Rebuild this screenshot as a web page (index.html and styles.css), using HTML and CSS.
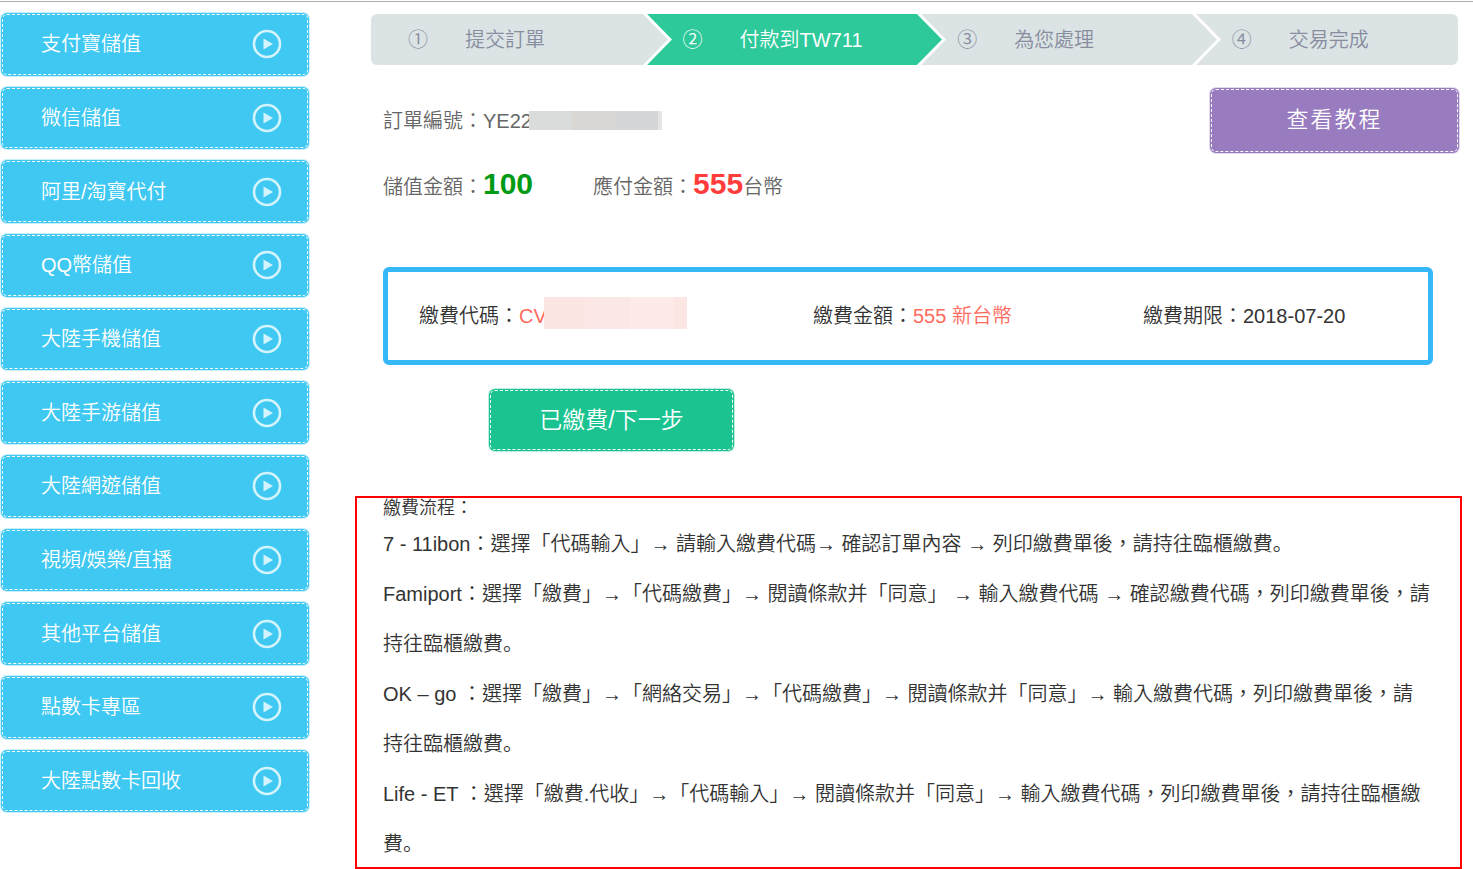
FILE: index.html
```html
<!DOCTYPE html>
<html lang="zh-Hant">
<head>
<meta charset="utf-8">
<meta name="viewport" content="width=device-width, initial-scale=1">
<title>付款到TW711</title>
<link rel="stylesheet" href="styles.css">
</head>
<body>
<svg class="defs" aria-hidden="true">
  <symbol id="play" viewBox="0 0 30 30">
    <circle cx="15" cy="15" r="13" fill="none" stroke="currentColor" stroke-width="2.6"/>
    <path d="M11.5 9.5 21 15l-9.500 5.500z" fill="currentColor"/>
  </symbol>
</svg>
<div class="page">
  <nav class="side">
    <a class="stitched side-link" href="#">支付寶儲值<svg class="play"><use href="#play"/></svg></a>
    <a class="stitched side-link" href="#">微信儲值<svg class="play"><use href="#play"/></svg></a>
    <a class="stitched side-link" href="#">阿里/淘寶代付<svg class="play"><use href="#play"/></svg></a>
    <a class="stitched side-link" href="#">QQ幣儲值<svg class="play"><use href="#play"/></svg></a>
    <a class="stitched side-link" href="#">大陸手機儲值<svg class="play"><use href="#play"/></svg></a>
    <a class="stitched side-link" href="#">大陸手游儲值<svg class="play"><use href="#play"/></svg></a>
    <a class="stitched side-link" href="#">大陸網遊儲值<svg class="play"><use href="#play"/></svg></a>
    <a class="stitched side-link" href="#">視頻/娛樂/直播<svg class="play"><use href="#play"/></svg></a>
    <a class="stitched side-link" href="#">其他平台儲值<svg class="play"><use href="#play"/></svg></a>
    <a class="stitched side-link" href="#">點數卡專區<svg class="play"><use href="#play"/></svg></a>
    <a class="stitched side-link" href="#">大陸點數卡回收<svg class="play"><use href="#play"/></svg></a>
  </nav>
  <main class="main">
    <ol class="steps">
      <li class="step"><span class="num">①</span>提交訂單<svg class="chevron" viewBox="0 0 30 51"><path class="fill-green" d="M3 0H30V51H3z"/><path class="fill-gray" d="M0 0H3L28 25.5 3 51H0z"/><path class="edge" d="M2-1 28 25.500 2 52"/></svg></li>
      <li class="step active"><span class="num">②</span>付款到TW711<svg class="chevron" viewBox="0 0 30 51"><path class="fill-gray" d="M3 0H30V51H3z"/><path class="fill-green" d="M0 0H3L28 25.5 3 51H0z"/><path class="edge" d="M2-1 28 25.500 2 52"/></svg></li>
      <li class="step"><span class="num">③</span>為您處理<svg class="chevron" viewBox="0 0 30 51"><path class="fill-gray" d="M0 0H30V51H0z"/><path class="edge" d="M2-1 28 25.500 2 52"/></svg></li>
      <li class="step last"><span class="num">④</span>交易完成</li>
    </ol>
    <section class="order">
      <div class="order-info">
        <p>訂單編號：YE22<span class="mask mask-gray"></span></p>
        <p class="amounts"><span>儲值金額：<b class="big green">100</b></span><span>應付金額：<b class="big red">555</b>台幣</span></p>
      </div>
      <a class="stitched tutorial" href="#">查看教程</a>
    </section>
    <section class="bill">
      <p class="code">繳費代碼：<span class="coral">CV</span><span class="mask mask-pink"></span></p>
      <p class="fee">繳費金額：<span class="coral">555 新台幣</span></p>
      <p class="due">繳費期限：2018-07-20</p>
    </section>
    <button class="stitched next" type="button">已繳費/下一步</button>
    <section class="guide">
      <h2>繳費流程：</h2>
      <p>7 - 11ibon：選擇「代碼輸入」→ 請輸入繳費代碼→ 確認訂單內容 → 列印繳費單後，請持往臨櫃繳費<span class="stop" lang="zh-Hans">。</span></p>
      <p>Famiport：選擇「繳費」→「代碼繳費」→ 閱讀條款并「同意」 → 輸入繳費代碼 → 確認繳費代碼，列印繳費單後，請持往臨櫃繳費<span class="stop" lang="zh-Hans">。</span></p>
      <p>OK – go ：選擇「繳費」→「網絡交易」→「代碼繳費」→ 閱讀條款并「同意」→ 輸入繳費代碼，列印繳費單後，請持往臨櫃繳費<span class="stop" lang="zh-Hans">。</span></p>
      <p>Life - ET ：選擇「繳費.代收」→「代碼輸入」→ 閱讀條款并「同意」→ 輸入繳費代碼，列印繳費單後，請持往臨櫃繳費<span class="stop" lang="zh-Hans">。</span></p>
    </section>
  </main>
</div>
</body>
</html>
```
FILE: styles.css
```css
* { box-sizing: border-box; }

body {
  margin: 0;
  padding-top: 1px;
  background: #fff;
  color: #333;
  font: 350 20px/30px "Liberation Sans", "Noto Sans CJK TC", sans-serif;
  text-spacing-trim: space-all;
}

p, h2, ol { margin: 0; padding: 0; }

.defs { display: none; }

.page {
  display: flex;
  align-items: flex-start;
  gap: 46px;
  border-top: 1px solid #b0b0b0;
  padding: 11px 11px 0 1px;
}

.stitched {
  border-radius: 6px;
  outline: 1px dashed #fff;
  outline-offset: -2px;
  color: #fff;
  text-decoration: none;
}

/* sidebar */
.side {
  flex: 0 0 308px;
  display: grid;
  grid-auto-rows: 1fr;
  gap: 11px;
  min-height: 92vh;
}

.side-link {
  display: flex;
  align-items: center;
  justify-content: space-between;
  padding: 0 27px 0 40px;
  background: #3fc8f1;
  box-shadow: 0 0 0 1px #c9effb;
}

.play {
  width: 30px;
  height: 30px;
  color: #d3f4fd;
}

/* main column */
.main {
  flex: 1;
  min-width: 0;
  padding-top: 1px;
}

.steps {
  display: flex;
  margin: 0 4px 0 16px;
  list-style: none;
}

.step {
  flex: 275 1 0;
  display: flex;
  align-items: center;
  height: 51px;
  padding-left: 37px;
  background: #dbe3e4;
  color: #878d9f;
}

.step:first-child { border-radius: 6px 0 0 6px; }
.step.last { flex-grow: 262; border-radius: 0 6px 6px 0; }
.step.active { background: #2dc99a; color: #fff; }

.num { width: 57px; }

.chevron {
  position: relative;
  flex: none;
  width: 30px;
  height: 51px;
  margin: 0 -26px 0 auto;
}

.fill-gray { fill: #dbe3e4; }
.fill-green { fill: #2dc99a; }
.edge { fill: none; stroke: #fff; stroke-width: 3; }

.order {
  display: flex;
  justify-content: space-between;
  align-items: flex-start;
  margin: 23px 3px 0 28px;
  color: #666;
}

.order-info p { line-height: 66px; }

.amounts { display: flex; gap: 60px; }

.big { font-size: 30px; font-weight: 700; line-height: 30px; }
.green { color: #009a14; }
.red { color: #ff3c3c; }
.coral { color: #ff6b5e; }

.mask {
  display: inline-block;
  position: relative;
  margin-left: -3px;
}

.mask-gray {
  width: 133px;
  height: 19px;
  margin-bottom: 4px;
  vertical-align: middle;
  background: linear-gradient(90deg, #dadcdb 0 32%, #d8d7d4 32% 65%, #d5d6d8 65% 97%, #e4e5e4 97%);
}

.mask-pink {
  width: 143px;
  height: 32px;
  margin-top: -3px;
  margin-bottom: 3px;
  vertical-align: top;
  background: linear-gradient(90deg, #fce6e4 0 30%, #fbe7e5 30% 60%, #fcebe8 60% 90%, #fbe6e4 90%);
}

.tutorial {
  width: 249px;
  padding: 17px 0 18px;
  background: #997bc0;
  box-shadow: 0 0 0 1px #e4dbef;
  font-size: 22px;
  letter-spacing: 2px;
  text-align: center;
}

.bill {
  display: grid;
  grid-template-columns: 394fr 330fr 285fr;
  align-items: center;
  margin: 47px 29px 0 28px;
  padding: 28px 0 28px 31px;
  border: 5px solid #36b8f8;
  border-radius: 6px;
  line-height: 32px;
}

.next {
  display: block;
  width: 245px;
  margin: 24px 0 45px 134px;
  padding: 16px 0;
  border: 0;
  background: #1bc390;
  box-shadow: 0 0 0 1px #bfeedf;
  font: inherit;
  font-size: 23px;
}

/* payment instructions */
.guide {
  padding: 2px 30px 0 28px;
  box-shadow: inset 0 0 0 2px #f00;
}

.guide h2 {
  font-size: 18px;
  font-weight: 350;
  line-height: 21px;
}

.guide p { line-height: 50px; }

.stop {
  font-family: "Noto Sans CJK SC", sans-serif;
  line-height: 20px;
}
```
